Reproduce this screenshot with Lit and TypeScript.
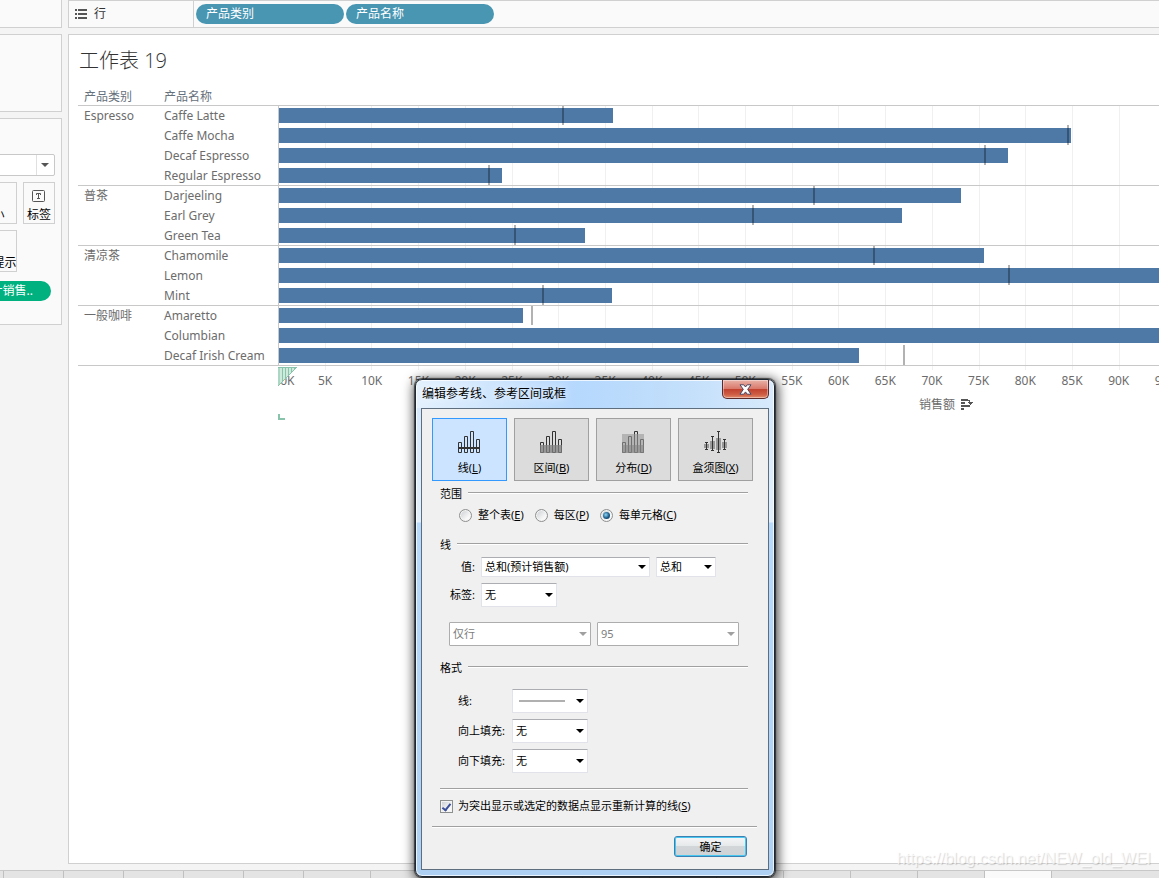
import { LitElement, html, svg, css, nothing } from "lit";
import { customElement, state } from "lit/decorators.js";

interface Row {
  name: string;
  value: number;
  ref: number;
}
interface Group {
  name: string;
  rows: Row[];
}

const PX_PER_K = 9.34;

const GROUPS: Group[] = [
  {
    name: "Espresso",
    rows: [
      { name: "Caffe Latte", value: 35.8, ref: 30.4 },
      { name: "Caffe Mocha", value: 84.8, ref: 84.5 },
      { name: "Decaf Espresso", value: 78.1, ref: 75.6 },
      { name: "Regular Espresso", value: 23.9, ref: 22.5 },
    ],
  },
  {
    name: "普茶",
    rows: [
      { name: "Darjeeling", value: 73, ref: 57.3 },
      { name: "Earl Grey", value: 66.7, ref: 50.8 },
      { name: "Green Tea", value: 32.8, ref: 25.3 },
    ],
  },
  {
    name: "清凉茶",
    rows: [
      { name: "Chamomile", value: 75.5, ref: 63.7 },
      { name: "Lemon", value: 95.9, ref: 78.2 },
      { name: "Mint", value: 35.7, ref: 28.3 },
    ],
  },
  {
    name: "一般咖啡",
    rows: [
      { name: "Amaretto", value: 26.1, ref: 27.1 },
      { name: "Columbian", value: 128.3, ref: 110.2 },
      { name: "Decaf Irish Cream", value: 62.1, ref: 66.9 },
    ],
  },
];

const TICKS = Array.from({ length: 28 }, (_, i) => i * 5);
const TABS = [60, 60, 60, 60, 60, 67, 78, 67, 67, 67, 67, 67, 67, 67, 67, 67, 67];
const ACTIVE_TAB = 15;

@customElement("bar-chart")
class BarChart extends LitElement {
  static styles = css`
    :host {
      display: block;
      position: relative;
      overflow: hidden;
      color: #6c6c6c;
      font: 12px/20px "Noto Sans", "Noto Sans CJK SC", sans-serif;
    }
    table {
      position: relative;
      table-layout: fixed;
      width: 1536px;
      border-collapse: separate;
      border-spacing: 0;
    }
    .category-col {
      width: 80px;
    }
    .name-col {
      width: 120px;
    }
    th {
      font-weight: 400;
      text-align: left;
      vertical-align: top;
      padding: 0 0 0 6px;
    }
    thead th {
      padding-top: 2px;
      height: 17px;
      line-height: 17px;
      color: #66707c;
    }
    td {
      padding: 0;
    }
    tbody th,
    tbody td {
      box-sizing: border-box;
      height: 20px;
      line-height: 19px;
    }
    .row > th {
      padding-top: 1px;
    }
    .first > *,
    tfoot .edge {
      border-top: 1px solid #c8c8c8;
    }
    .plot {
      position: relative;
      vertical-align: bottom;
      padding-bottom: 2px;
      border-left: 1px solid #c8c8c8;
    }
    .bar {
      height: 15px;
      background: #4e79a7;
    }
    .ref {
      position: absolute;
      top: 0;
      bottom: 0;
      width: 2px;
      background: rgba(0, 0, 0, 0.3);
    }
    .grid {
      position: absolute;
      top: 19px;
      left: 200px;
      height: 265px;
      width: 1336px;
    }
    .grid i {
      position: absolute;
      top: 0;
      bottom: 0;
      width: 1px;
      background: #f0f0f0;
    }
    .axis {
      position: relative;
    }
    .ticks {
      display: flex;
      height: 30px;
      line-height: 29px;
      margin-left: -23px;
    }
    .ticks span {
      flex: none;
      box-sizing: border-box;
      text-align: center;
    }
    .ticks span:first-child {
      padding-left: 18px;
    }
    .handle {
      position: absolute;
      left: 0;
      top: 1px;
    }
    .title {
      display: flex;
      align-items: center;
      justify-content: center;
      gap: 6px;
      height: 18px;
      line-height: 18px;
    }
    .corner {
      display: block;
    }
  `;

  render() {
    return html`
      <div class="grid">
        ${TICKS.slice(1).map((t) => html`<i style="left:${Math.round(t * PX_PER_K)}px"></i>`)}
      </div>
      <table>
        <colgroup>
          <col class="category-col" />
          <col class="name-col" />
          <col />
        </colgroup>
        <thead>
          <tr>
            <th scope="col">产品类别</th>
            <th scope="col">产品名称</th>
            <th></th>
          </tr>
        </thead>
        <tbody>
          ${GROUPS.map((g) =>
            g.rows.map(
              (r, i) => html`<tr class=${i === 0 ? "first" : "row"}>
                ${i === 0 ? html`<th scope="rowgroup" rowspan=${g.rows.length}>${g.name}</th>` : nothing}
                <th scope="row">${r.name}</th>
                <td class="plot">
                  <div class="bar" style="width:${Math.round(r.value * PX_PER_K)}px"></div>
                  <div class="ref" style="left:${Math.round(r.ref * PX_PER_K) - 1}px"></div>
                </td>
              </tr>`
            )
          )}
        </tbody>
        <tfoot>
          <tr>
            <td class="edge" colspan="2"></td>
            <td class="edge axis">
              <div class="ticks">
                ${TICKS.map((t) => html`<span style="width:${5 * PX_PER_K}px">${t}K</span>`)}
              </div>
              <div class="title">
                销售额
                <svg width="12" height="12" viewBox="0 0 12 12" fill="#555">
                  <path d="M0 0h7v2H0zM0 3h4v2H0zM0 6h7v2H0zM0 9h3v2H0z" />
                  <path d="M7 1h2v2h3v1h-1v1h-1v1H9V5H8V4H7V3h1V2H7zM5 6h4v2H5z" />
                </svg>
              </div>
              <svg class="corner" width="7" height="6" fill="#88c4ac">
                <path d="M0 0h2v4h5v2H0z" />
              </svg>
              <svg class="handle" width="19" height="19" viewBox="0 0 19 19">
                <path d="M0 0H19L0 19z" fill="#cfe9dc" />
                <path
                  d="M1 0V18M4.500 0V14M7.500 0V11M10.500 0V8M13.500 0V5M16.500 0V2M0 .5H19"
                  stroke="#88c4ac"
                  fill="none"
                />
                <path d="M19 0L0 19" stroke="#88c4ac" />
              </svg>
            </td>
          </tr>
        </tfoot>
      </table>
    `;
  }
}

const outlineBars = (color: string) => svg`
  <path d="M.5 11.500h3v10h-3zM6.500 5.500h3v16h-3zM12.500 .5h3v21h-3zM18.500 8.500h3v13h-3z"
    fill="none" stroke=${color} />`;

const KINDS = [
  {
    id: "line",
    label: "线",
    key: "L",
    icon: svg`${outlineBars("#333")}<path d="M0 17h22" stroke="#333" stroke-width="2" />`,
  },
  {
    id: "band",
    label: "区间",
    key: "B",
    icon: svg`${outlineBars("#333")}<path d="M0 14h22v8H0z" fill="#808080" opacity=".75" />`,
  },
  {
    id: "distribution",
    label: "分布",
    key: "D",
    icon: svg`${outlineBars("#333")}<path d="M0 3h22v19H0z" fill="#999" opacity=".6" />
      <path d="M0 14h22v8H0z" fill="#808080" opacity=".5" />`,
  },
  {
    id: "box",
    label: "盒须图",
    key: "X",
    icon: svg`<path d="M0 13h5v4H0zM6 10h5v8H6zM12 7h5v12h-5zM18 11h5v6h-5z" fill="#999" />
      <path d="M2.500 11v8M1 11.500h3M1 18.500h3M8.500 5v15M7 5.500h3M7 19.500h3M14.500 0v22M13 .5h3M13 21.500h3M20.500 8v11M19 8.500h3M19 18.500h3"
        fill="none" stroke="#333" />`,
  },
];

const SCOPES = [
  { id: "table", label: "整个表", key: "E" },
  { id: "pane", label: "每区", key: "P" },
  { id: "cell", label: "每单元格", key: "C" },
];

@customElement("reference-line-dialog")
class ReferenceLineDialog extends LitElement {
  static styles = css`
    :host {
      display: block;
      box-sizing: border-box;
      width: 360px;
      padding: 0 5px 6px;
      border: 1px solid #1c2733;
      border-radius: 7px;
      color: #000;
      font: 11px/16px "Noto Sans", "Noto Sans CJK SC", sans-serif;
      background:
        linear-gradient(90deg, #e4f1fd 0, #b5d8fd 45%, #c3dffb 75%, #d8eafc 100%) top / 100% 28px no-repeat,
        linear-gradient(#d3e7fc, #e2effc 142px, #b7d9fc 143px, #aed0f2);
      box-shadow:
        inset 0 0 0 1px rgba(255, 255, 255, 0.75),
        0 0 1px 1px rgba(0, 0, 0, 0.6),
        1px 2px 12px 2px rgba(0, 0, 0, 0.75);
    }
    button,
    select {
      font: inherit;
      color: inherit;
      margin: 0;
    }
    .titlebar {
      display: flex;
      justify-content: space-between;
      align-items: flex-start;
      height: 28px;
      padding-left: 1px;
    }
    h2 {
      margin: 0;
      font-size: 12px;
      line-height: 28px;
      font-weight: 400;
      text-shadow: 0 0 8px #fff;
    }
    .close {
      display: grid;
      place-items: center;
      box-sizing: border-box;
      width: 47px;
      height: 19px;
      padding: 0;
      border: 1px solid #5b2a2a;
      border-top: 0;
      border-radius: 0 0 5px 5px;
      background: linear-gradient(#e9b3a8, #d9796b 48%, #c0402e 50%, #ce5d44 80%, #e08a6a);
      box-shadow: inset 0 0 0 1px rgba(255, 255, 255, 0.4);
    }
    .body {
      border: 1px solid #5f6e7e;
      padding: 9px 11px 12px 10px;
      background: #f0f0f0;
    }
    .kinds {
      display: grid;
      grid-template-columns: repeat(4, 75px);
      gap: 7px;
    }
    .kind {
      display: flex;
      flex-direction: column;
      align-items: center;
      gap: 7px;
      height: 63px;
      padding: 12px 0 0;
      border: 1px solid #a0a0a0;
      background: #dcdcdc;
    }
    .kind svg {
      flex: none;
      display: block;
    }
    .kind.active {
      border-color: #3399ff;
      background: #cce4ff;
    }
    fieldset {
      margin: 0 9px 0 8px;
      padding: 0;
      border: 0;
      min-width: 0;
    }
    legend {
      display: flex;
      gap: 6px;
      width: 100%;
      padding: 0;
    }
    legend::after,
    .rule {
      content: "";
      height: 1px;
      background: #a0a0a0;
      box-shadow: 0 1px #fff;
    }
    legend::after {
      flex: 1;
      margin-top: 6px;
    }
    .scope {
      margin-top: 5px;
    }
    .scopes {
      display: flex;
      gap: 11px;
      padding: 5px 0 0 19px;
    }
    .choice {
      display: flex;
      align-items: center;
      gap: 6px;
    }
    input {
      appearance: none;
      flex: none;
      display: grid;
      place-items: center;
      box-sizing: border-box;
      width: 13px;
      height: 13px;
      margin: 0;
      border: 1px solid #8e8f8f;
      background: linear-gradient(135deg, #c8ccd0, #f8f8f8 70%);
      box-shadow: inset 0 0 0 1px #f4f4f4;
    }
    input[type="radio"] {
      border-radius: 50%;
    }
    input[type="radio"]:checked::after {
      content: "";
      width: 7px;
      height: 7px;
      border-radius: 50%;
      background: radial-gradient(circle at 40% 40%, #8fd8f8, #1b5a86 55%, #0e2d48);
    }
    input[type="checkbox"]:checked::after {
      content: "";
      box-sizing: border-box;
      width: 5px;
      height: 9px;
      border: solid #3b4f9a;
      border-width: 0 2px 2px 0;
      transform: rotate(38deg);
    }
    .line-settings {
      margin-top: 14px;
    }
    .field {
      display: flex;
      align-items: center;
      gap: 6px;
    }
    .field > label {
      width: 35px;
      text-align: right;
    }
    .value {
      margin-top: 4px;
    }
    .label {
      margin-top: 6px;
    }
    .combo {
      position: relative;
      display: block;
      height: 24px;
    }
    .combo.short {
      height: 20px;
    }
    .combo select {
      appearance: none;
      display: block;
      box-sizing: border-box;
      width: 100%;
      height: 100%;
      padding: 0 3px;
      border: 1px solid #e2e3ea;
      border-top-color: #abadb3;
      border-radius: 1px;
      background: #fff;
      opacity: 1;
    }
    .combo::after {
      content: "";
      position: absolute;
      right: 4px;
      top: 50%;
      margin-top: -2px;
      border: 4px solid transparent;
      border-top-color: #000;
      border-bottom: 0;
      pointer-events: none;
    }
    .combo.off::after {
      border-top-color: #a0a0a0;
    }
    .combo.off select {
      color: #7d7d7d;
      border-color: #adadad;
    }
    .w-large {
      width: 169px;
    }
    .w-small {
      width: 60px;
    }
    .w-medium {
      width: 76px;
    }
    .disabled {
      display: grid;
      grid-template-columns: 1fr 1fr;
      gap: 6px;
      margin: 15px 9px 0;
    }
    .stroke {
      position: absolute;
      left: 7px;
      top: 11px;
      width: 46px;
      height: 2px;
      background: #b0b0b0;
      pointer-events: none;
    }
    .format {
      margin-top: 14px;
    }
    .format-grid {
      display: grid;
      grid-template-columns: 54px 76px;
      row-gap: 6px;
      align-items: center;
      padding: 13px 0 0 18px;
    }
    .recalc-rule {
      margin: 15px 9px 0 8px;
    }
    .recalc {
      margin: 9px 9px 0 8px;
      gap: 5px;
    }
    .footer-rule {
      margin: 12px 0 0;
    }
    .footer {
      display: flex;
      justify-content: flex-end;
      padding: 9px 10px 0 0;
    }
    .ok {
      width: 73px;
      height: 21px;
      padding: 0;
      border: 1px solid #3c7fb1;
      border-radius: 3px;
      background: linear-gradient(#f4f5f6, #e6e9ea 48%, #d2d6d8 50%, #cfd3d5);
      box-shadow: inset 0 0 0 1px #48c8f0;
    }
  `;

  @state() private kind = "line";
  @state() private scope = "cell";

  private combo(id: string, value: string, width: string, off = false, extra: unknown = nothing, label?: string) {
    return html`<span class="combo ${width} ${off ? "off" : ""}">
      <select id=${id} aria-label=${label ?? nothing} ?disabled=${off}>
        <option>${value}</option>
      </select>
      ${extra}
    </span>`;
  }

  render() {
    return html`
      <header class="titlebar">
        <h2>编辑参考线、参考区间或框</h2>
        <button class="close" aria-label="关闭">
          <svg width="13" height="11" viewBox="0 0 13 11">
            <path
              d="M1 .8H4.800L6.500 3 8.200 .8H12L8.700 5.400 12 10.200H8.200L6.500 7.900 4.800 10.200H1L4.300 5.400z"
              fill="#fff"
              stroke="#4a4660"
            />
          </svg>
        </button>
      </header>
      <div class="body">
        <div class="kinds">
          ${KINDS.map(
            (k) => html`<button
              class="kind ${k.id === this.kind ? "active" : ""}"
              aria-pressed=${k.id === this.kind}
              @click=${() => (this.kind = k.id)}
            >
              <svg width="23" height="22" viewBox="0 0 23 22">${k.icon}</svg>
              <span>${k.label}(<u>${k.key}</u>)</span>
            </button>`
          )}
        </div>
        <fieldset class="scope">
          <legend>范围</legend>
          <div class="scopes">
            ${SCOPES.map(
              (s) => html`<label class="choice">
                <input
                  type="radio"
                  name="scope"
                  .checked=${s.id === this.scope}
                  @change=${() => (this.scope = s.id)}
                />
                <span>${s.label}(<u>${s.key}</u>)</span>
              </label>`
            )}
          </div>
        </fieldset>
        <fieldset class="line-settings">
          <legend>线</legend>
          <div class="field value">
            <label for="measure">值:</label>
            ${this.combo("measure", "总和(预计销售额)", "short w-large")}
            ${this.combo("aggregate", "总和", "short w-small", false, nothing, "聚合")}
          </div>
          <div class="field label">
            <label for="label">标签:</label>
            ${this.combo("label", "无", "w-medium")}
          </div>
          <div class="disabled">
            ${this.combo("lines", "仅行", "", true, nothing, "线型")}
            ${this.combo("confidence", "95", "", true, nothing, "置信区间")}
          </div>
        </fieldset>
        <fieldset class="format">
          <legend>格式</legend>
          <div class="format-grid">
            <label for="stroke">线:</label>
            ${this.combo("stroke", "", "w-medium", false, html`<span class="stroke"></span>`)}
            <label for="above">向上填充:</label>
            ${this.combo("above", "无", "w-medium")}
            <label for="below">向下填充:</label>
            ${this.combo("below", "无", "w-medium")}
          </div>
        </fieldset>
        <div class="rule recalc-rule"></div>
        <label class="choice recalc">
          <input type="checkbox" checked />
          <span>为突出显示或选定的数据点显示重新计算的线(<u>S</u>)</span>
        </label>
        <div class="rule footer-rule"></div>
        <div class="footer"><button class="ok">确定</button></div>
      </div>
    `;
  }
}

@customElement("app-root")
class AppRoot extends LitElement {
  static styles = css`
    :host {
      display: flex;
      flex-direction: column;
      position: relative;
      height: 100vh;
      overflow: hidden;
      background: #f4f4f4;
      color: #222;
      font: 12px/18px "Noto Sans", "Noto Sans CJK SC", sans-serif;
    }
    button {
      font: inherit;
      color: inherit;
      margin: 0;
    }
    .workspace {
      flex: 1;
      min-height: 0;
      display: flex;
      gap: 6px;
    }
    .side {
      flex: none;
      width: 62px;
      overflow: hidden;
      display: flex;
      justify-content: flex-end;
    }
    .cards {
      flex: none;
      width: 170px;
      display: flex;
      flex-direction: column;
      gap: 6px;
    }
    .card {
      box-sizing: border-box;
      border: 1px solid #d0d0d0;
      background: #fafafa;
    }
    .pages {
      height: 28px;
      border-top: 0;
    }
    .filters {
      height: 78px;
    }
    .marks {
      height: 207px;
      padding: 35px 6px 0 0;
      display: flex;
      flex-direction: column;
      align-items: flex-end;
    }
    .mark-type {
      position: relative;
      width: 150px;
      height: 22px;
    }
    .mark-type select {
      appearance: none;
      width: 100%;
      height: 100%;
      border: 1px solid #c8c8c8;
      border-radius: 2px;
      background: linear-gradient(90deg, transparent 130px, #e0e0e0 130px, #e0e0e0 131px, transparent 131px) #fff;
    }
    .mark-type::after {
      content: "";
      position: absolute;
      right: 6px;
      top: 9px;
      border: 4px solid transparent;
      border-top-color: #555;
      border-bottom: 0;
    }
    .encodings {
      display: grid;
      grid-template-columns: 49px 32px;
      gap: 6px;
      margin-top: 6px;
    }
    .encoding {
      display: flex;
      flex-direction: column;
      align-items: center;
      justify-content: flex-end;
      gap: 4px;
      box-sizing: border-box;
      height: 42px;
      padding: 0;
      border: 1px solid #d0d0d0;
      background: #fafafa;
      color: #000;
      line-height: 16px;
      white-space: nowrap;
    }
    .pill {
      box-sizing: border-box;
      height: 20px;
      padding: 0 10px;
      border: 0;
      border-radius: 10px;
      background: #4996b2;
      color: #fff;
      text-align: left;
      line-height: 20px;
    }
    .measure {
      width: 146px;
      margin: 9px 4px 0 0;
      padding-right: 18px;
      background: #00b180;
      text-align: right;
    }
    .main {
      flex: 1;
      min-width: 0;
      display: flex;
      flex-direction: column;
      gap: 6px;
    }
    .shelf {
      box-sizing: border-box;
      display: flex;
      height: 28px;
      border: 1px solid #d0d0d0;
      border-right: 0;
      background: #fafafa;
    }
    .shelf-name {
      display: flex;
      align-items: center;
      gap: 7px;
      box-sizing: border-box;
      width: 125px;
      padding-left: 6px;
      border-right: 1px solid #d0d0d0;
      color: #333;
    }
    .shelf-name svg {
      flex: none;
    }
    .fields {
      display: flex;
      gap: 2px;
      padding: 3px 2px;
    }
    .fields .pill {
      width: 148px;
    }
    .view {
      flex: 1;
      min-height: 0;
      box-sizing: border-box;
      padding: 12px 0 0 9px;
      border: 1px solid #d0d0d0;
      border-right: 0;
      background: #fff;
      overflow: hidden;
    }
    h1 {
      margin: 0 0 11px 1px;
      font: 300 20px/28px "Open Sans", "Noto Sans CJK SC", sans-serif;
      color: #333;
    }
    .tabs {
      display: flex;
      height: 7px;
      margin-top: 6px;
      padding-left: 3px;
      overflow: hidden;
      border-top: 1px solid #c8c8c8;
      background: #e4e4e4;
    }
    .tab {
      flex: none;
      box-sizing: border-box;
      padding: 0;
      border: 0;
      border-left: 1px solid #c0c0c0;
      background: #e4e4e4;
    }
    .tab.active {
      background: #fafafa;
    }
    .dialog {
      position: absolute;
      left: 415px;
      top: 379px;
    }
    .watermark {
      position: absolute;
      right: 8px;
      bottom: 9px;
      font: 16px/20px "Liberation Sans", sans-serif;
      color: rgba(255, 255, 255, 0.7);
      text-shadow: 1px 1px 1px rgba(0, 0, 0, 0.16);
    }
  `;

  render() {
    return html`
      <div class="workspace">
        <aside class="side">
          <div class="cards">
            <section class="card pages"></section>
            <section class="card filters"></section>
            <section class="card marks">
              <div class="mark-type"><select aria-label="标记类型"></select></div>
              <div class="encodings">
                <button class="encoding">大小</button>
                <button class="encoding">
                  <svg width="14" height="13" viewBox="0 0 14 13" fill="none" stroke="#555">
                    <rect x=".5" y=".5" width="12" height="11" rx="1" />
                    <path d="M4.500 5V3.500h4V5M6.500 3.500v5M5 8.500h3" />
                  </svg>
                  标签
                </button>
                <button class="encoding">工具提示</button>
              </div>
              <button class="pill measure">预计销售..</button>
            </section>
          </div>
        </aside>
        <main class="main">
          <section class="shelf">
            <div class="shelf-name">
              <svg width="12" height="11" viewBox="0 0 12 11" fill="#555">
                <path d="M0 0h2v2H0zM3 0h9v2H3zM0 4h2v2H0zM3 4h9v2H3zM0 8h2v2H0zM3 8h9v2H3z" />
              </svg>
              行
            </div>
            <div class="fields">
              <button class="pill">产品类别</button>
              <button class="pill">产品名称</button>
            </div>
          </section>
          <section class="view">
            <h1>工作表 19</h1>
            <bar-chart></bar-chart>
          </section>
        </main>
      </div>
      <nav class="tabs" aria-label="工作表">
        ${TABS.map(
          (w, i) =>
            html`<button
              class="tab ${i === ACTIVE_TAB ? "active" : ""}"
              aria-label="工作表 ${i + 5}"
              style="width:${w}px"
            ></button>`
        )}
      </nav>
      <reference-line-dialog class="dialog" role="dialog" aria-label="编辑参考线、参考区间或框"></reference-line-dialog>
      <div class="watermark">https://blog.csdn.net/NEW_old_WEI</div>
    `;
  }
}
